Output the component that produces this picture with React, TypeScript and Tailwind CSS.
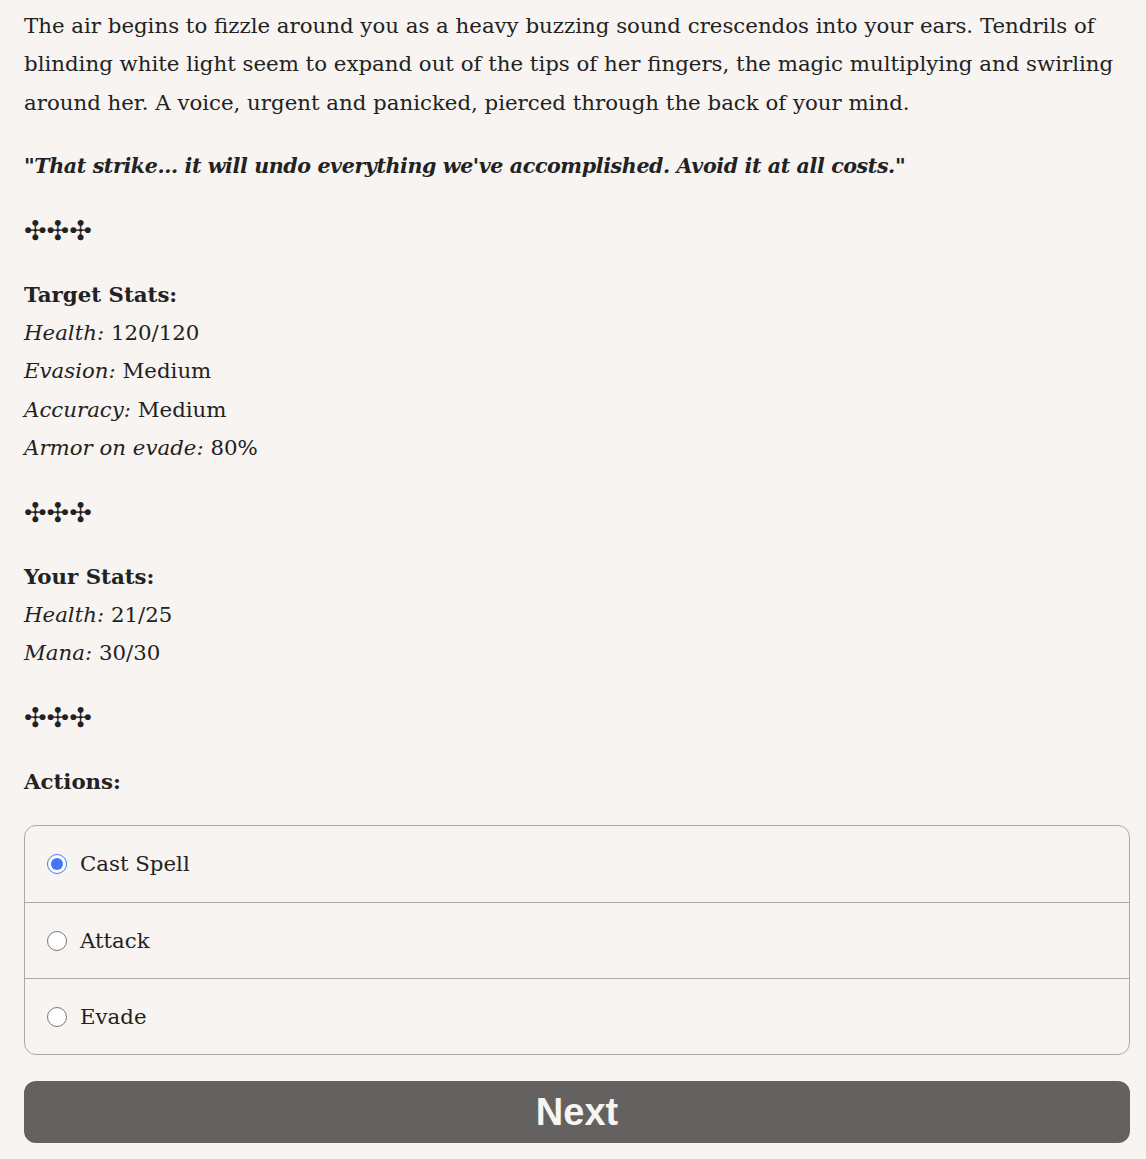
import { useState } from "react";

const serif = { fontFamily: '"DejaVu Serif", serif' };

const Divider = () => (
  <p
    className="mb-[25px] text-[27px] leading-[40px] font-bold"
    style={{ fontFamily: '"DejaVu Sans", sans-serif' }}
  >
    ✣✣✣
  </p>
);

const Stat = ({ label, value }: { label: string; value: string }) => (
  <div>
    <em>{label}:</em> {value}
  </div>
);

export default function App() {
  const [action, setAction] = useState("Cast Spell");
  const actions = ["Cast Spell", "Attack", "Evade"];

  return (
    <div
      className="min-h-screen bg-[#f7f4f1] text-[#222222] pl-6 pr-4 pt-[7px] pb-4 text-[21.3px] leading-[38.4px]"
      style={serif}
    >
      <p className="mb-[25px]">
        The air begins to fizzle around you as a heavy buzzing sound crescendos into your ears. Tendrils of
        blinding white light seem to expand out of the tips of her fingers, the magic multiplying and swirling
        around her. A voice, urgent and panicked, pierced through the back of your mind.
      </p>

      <p className="mb-[25px] font-bold italic text-[20.6px] tracking-[-0.4px]">
        "That strike... it will undo everything we've accomplished. Avoid it at all costs."
      </p>

      <Divider />

      <div className="mb-[25px]">
        <div className="font-bold">Target Stats:</div>
        <Stat label="Health" value="120/120" />
        <Stat label="Evasion" value="Medium" />
        <Stat label="Accuracy" value="Medium" />
        <Stat label="Armor on evade" value="80%" />
      </div>

      <Divider />

      <div className="mb-[25px]">
        <div className="font-bold">Your Stats:</div>
        <Stat label="Health" value="21/25" />
        <Stat label="Mana" value="30/30" />
      </div>

      <Divider />

      <p className="mb-[24px] font-bold">Actions:</p>

      <div className="border border-[#aaaaaa] rounded-xl overflow-hidden">
        {actions.map((a, i) => (
          <label
            key={a}
            className={`flex items-center gap-[13px] px-[22px] h-[76px] cursor-pointer ${
              i > 0 ? "border-t border-[#aaaaaa]" : ""
            }`}
          >
            <input
              type="radio"
              name="action"
              checked={action === a}
              onChange={() => setAction(a)}
              className="w-5 h-5 m-0 accent-[#4176f5]"
            />
            <span>{a}</span>
          </label>
        ))}
      </div>

      <button
        className="mt-[26px] w-full h-[62px] rounded-xl bg-[#636260] text-[#f7f4f1] font-bold text-[38px] leading-none"
        style={{ fontFamily: '"Liberation Sans", Arial, sans-serif' }}
      >
        Next
      </button>
    </div>
  );
}
